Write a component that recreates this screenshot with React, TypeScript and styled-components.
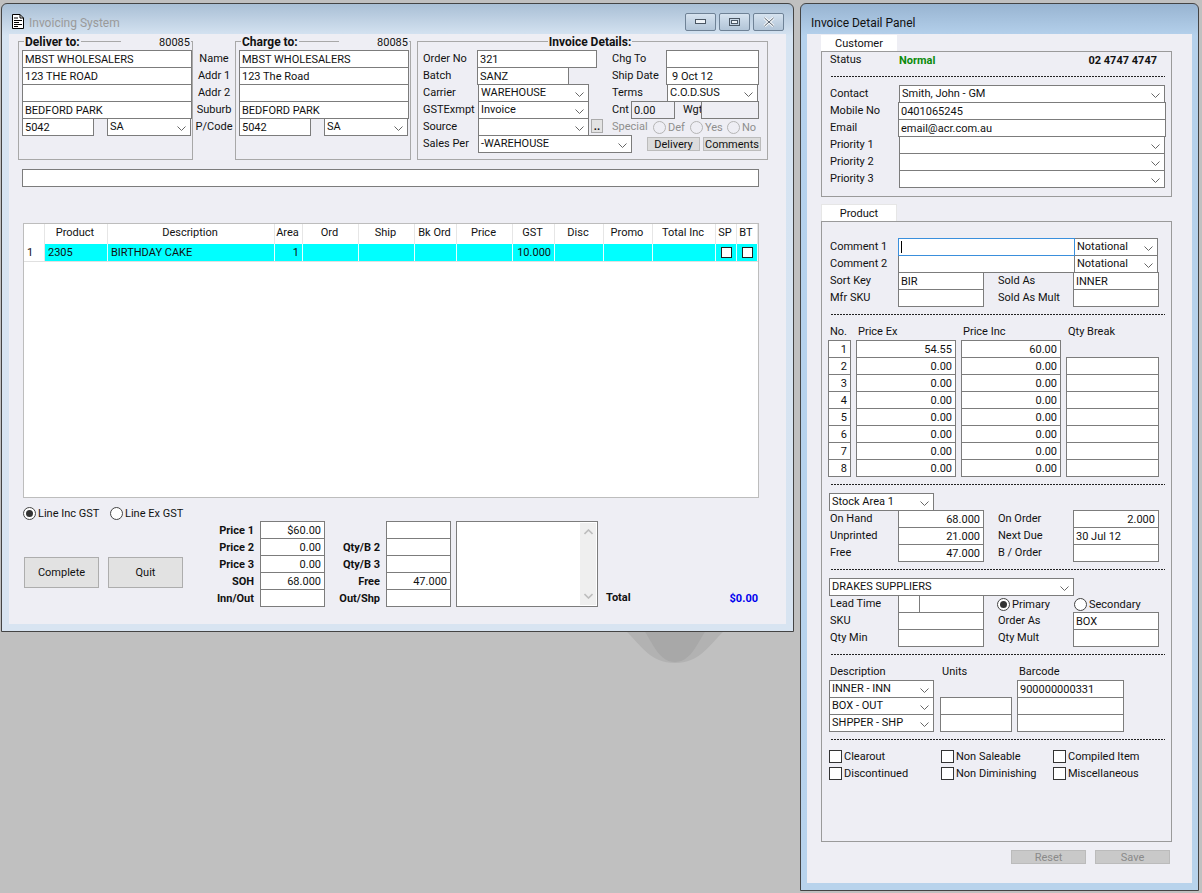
import React from 'react'
import styled, { createGlobalStyle } from 'styled-components'

const GlobalStyle = createGlobalStyle`
  html, body {
    margin: 0;
    background: #c0c0c0;
  }
  body {
    font-family: Roboto, "Liberation Sans", sans-serif;
    font-size: 11px;
    color: #111;
  }
`

const Desktop = styled.div`
  position: relative;
  width: 1202px;
  height: 893px;
  overflow: hidden;
  background: #c0c0c0;
`

const Blob = styled.svg`
  position: absolute;
  left: 620px;
  top: 630px;
`

const Window = styled.div<{ $left: number; $width: number; $height: number; $side: string; $pad: number }>`
  position: absolute;
  left: ${({ $left }) => $left}px;
  top: 3px;
  width: ${({ $width }) => $width}px;
  height: ${({ $height }) => $height}px;
  box-sizing: border-box;
  display: flex;
  flex-direction: column;
  padding: 0 ${({ $pad }) => $pad}px 7px;
  border: 1px solid #444;
  border-radius: 6px 6px 0 0;
  background: ${({ $side }) => $side};
`

const TitleBar = styled.div<{ $active?: boolean }>`
  flex: none;
  height: 30px;
  display: flex;
  align-items: center;
  gap: 5px;
  font-size: 12px;
  padding-top: 8px;
  box-sizing: border-box;
  color: ${({ $active }) => ($active ? '#111' : '#9a9a9a')};
`

const TitleIcon = styled.svg`
  flex: none;
  margin-left: 3px;
  margin-top: -3px;
`

const TitleText = styled.span`
  flex: 1;
`

const DetailTitle = styled(TitleText)`
  margin-left: 4px;
`

const CaptionButtons = styled.div`
  display: flex;
  gap: 3px;
  margin-top: -2px;
  margin-right: 2px;
`

const CaptionButton = styled.div`
  width: 31px;
  height: 18px;
  box-sizing: border-box;
  display: flex;
  align-items: center;
  justify-content: center;
  border: 1px solid #6f8296;
  border-radius: 2px;
  background: linear-gradient(#d7e3ef, #c3d3e3 50%, #b2c5d8);
`

const Client = styled.div`
  flex: 1;
  min-height: 0;
  background: #eeeef4;
`

const MainClient = styled(Client)`
  padding-top: 7px;
`

const TopRow = styled.div`
  display: flex;
  margin-left: 9px;
  height: 119px;
`

const Group = styled.div`
  position: relative;
  box-sizing: border-box;
  border: 1px solid #a8a8a8;
`

const AddressGroup = styled(Group)<{ $w: number }>`
  width: ${({ $w }) => $w}px;
  padding: 8px 0 0 3px;
`

const Legend = styled.div<{ $center?: boolean }>`
  position: absolute;
  top: -7px;
  left: 5px;
  right: ${({ $center }) => ($center ? 10 : 1)}px;
  display: flex;
  justify-content: ${({ $center }) => ($center ? 'center' : 'space-between')};
  line-height: 14px;
`

const LegendTitle = styled.span`
  background: #eeeef4;
  padding: 0 1px;
  font-weight: 700;
  font-size: 12px;
`

const LegendCode = styled.span`
  background: #eeeef4;
  width: 69px;
  text-align: right;
  padding: 1px 1px 0 0;
`

const AddressGrid = styled.div`
  display: grid;
  grid-template-columns: 72px 13px 85px;
  grid-auto-rows: 17px;
  width: 170px;
`

const Box = styled.div<{ $w?: number; $right?: boolean; $disabled?: boolean; $indent?: number }>`
  box-sizing: border-box;
  flex: none;
  width: ${({ $w }) => ($w ? `${$w}px` : 'auto')};
  height: 18px;
  border: 1px solid #7c7c7c;
  background: ${({ $disabled }) => ($disabled ? '#eeeef4' : '#fff')};
  padding: 0 ${({ $right }) => ($right ? 3 : 2)}px 0 ${({ $indent }) => $indent ?? 2}px;
  line-height: 17px;
  white-space: nowrap;
  overflow: hidden;
  text-align: ${({ $right }) => ($right ? 'right' : 'left')};
`

const WideBox = styled(Box)`
  grid-column: 1 / -1;
`

const FocusBox = styled(Box)`
  position: relative;
  border-color: #3a8fdc;
  z-index: 1;
`

const Caret = styled.span`
  display: block;
  width: 1px;
  height: 12px;
  margin: 2px 0 0 0;
  background: #000;
`

const ComboShell = styled(Box)<{ $shift?: number }>`
  display: flex;
  align-items: flex-start;
  justify-content: space-between;
  margin-left: ${({ $shift }) => $shift ?? 0}px;
  line-height: 15px;
`

const Chevron = styled.svg`
  flex: none;
  margin: 7px 2px 0 0;
`

const Combo = ({ w, text, shift }: { w?: number; text?: string; shift?: number }) => (
  <ComboShell $w={w} $shift={shift}>
    <span>{text}</span>
    <Chevron width="9" height="5" viewBox="0 0 9 5">
      <path d="M0.5 0.5 L4.5 4.5 L8.5 0.5" fill="none" stroke="#666" />
    </Chevron>
  </ComboShell>
)

const LabelColumn = styled.div`
  flex: none;
  width: 42px;
  padding-top: 9px;
  box-sizing: border-box;
  text-align: center;
  line-height: 17px;
`

const InvoiceGroup = styled(Group)`
  width: 351px;
  margin-left: 6px;
  padding: 8px 0 0 5px;
  display: flex;
`

const InvoiceColumn = styled.div<{ $w: number }>`
  flex: none;
  width: ${({ $w }) => $w}px;
`

const Row = styled.div<{ $h?: number }>`
  display: flex;
  height: ${({ $h }) => $h ?? 17}px;
  align-items: flex-start;
`

const Label = styled.span<{ $w?: number; $off?: boolean }>`
  flex: none;
  box-sizing: border-box;
  width: ${({ $w }) => ($w ? `${$w}px` : 'auto')};
  line-height: 18px;
  white-space: nowrap;
  color: ${({ $off }) => ($off ? '#8e8e8e' : 'inherit')};
`

const PanelLabel = styled(Label)`
  padding-left: 1px;
`

const SideLabel = styled(Label)`
  width: 75px;
  margin-left: 14px;
`

const WeightLabel = styled(Label)`
  width: 18px;
  margin-left: 8px;
`

const DotsButton = styled.div`
  flex: none;
  width: 12px;
  height: 14px;
  margin: 1px 0 0 2px;
  box-sizing: border-box;
  border: 1px solid #aaa;
  background: #e3e3e3;
  line-height: 14px;
  text-align: center;
  font-weight: 700;
`

const RadioDot = styled.span<{ $on?: boolean; $off?: boolean }>`
  flex: none;
  position: relative;
  display: inline-block;
  box-sizing: border-box;
  width: 13px;
  height: 13px;
  border: 1px solid ${({ $off }) => ($off ? '#b5b5b5' : '#444')};
  border-radius: 50%;
  background: ${({ $off }) => ($off ? '#eeeef4' : '#fff')};

  &::after {
    content: '';
    display: ${({ $on }) => ($on ? 'block' : 'none')};
    position: absolute;
    inset: 2px;
    border-radius: 50%;
    background: #333;
  }
`

const RadioItem = styled.label<{ $w?: number; $off?: boolean }>`
  flex: none;
  display: flex;
  align-items: center;
  gap: 2px;
  height: 15px;
  width: ${({ $w }) => ($w ? `${$w}px` : 'auto')};
  white-space: nowrap;
  color: ${({ $off }) => ($off ? '#8e8e8e' : 'inherit')};
`

const FormRadio = styled(RadioItem)`
  margin-top: 2px;
`

const PrimaryRadio = styled(FormRadio)`
  margin-left: 13px;
`

const SmallButtons = styled.div`
  display: flex;
  justify-content: flex-end;
  gap: 3px;
  width: 149px;
  padding-top: 2px;
`

const SmallButton = styled.div<{ $w: number }>`
  box-sizing: border-box;
  width: ${({ $w }) => $w}px;
  height: 14px;
  border: 1px solid #bcbcbc;
  background: #dcdcdc;
  line-height: 13px;
  text-align: center;
`

const ProgressBox = styled(Box)`
  width: 737px;
  margin: 9px 0 0 13px;
`

const GridTable = styled.div`
  box-sizing: border-box;
  width: 736px;
  height: 275px;
  margin: 36px 0 0 14px;
  border: 1px solid #bdbdbd;
  background: #fff;
`

const tableColumns = '21px 63px 167px 28px 56px 56px 42px 56px 42px 49px 49px 63px 21px 21px'

const TableRow = styled.div<{ $head?: boolean }>`
  display: grid;
  grid-template-columns: ${tableColumns};
  height: ${({ $head }) => ($head ? 20 : 18)}px;
  box-sizing: border-box;
  border-bottom: ${({ $head }) => ($head ? 'none' : '1px solid #e0e0e0')};
`

const HeadCell = styled.div`
  box-sizing: border-box;
  border-right: 1px solid #e6e6e6;
  padding-right: 2px;
  text-align: center;
  line-height: 17px;
  white-space: nowrap;
`

const DataCell = styled.div<{ $blank?: boolean; $right?: boolean }>`
  box-sizing: border-box;
  display: flex;
  align-items: center;
  justify-content: ${({ $right }) => ($right ? 'flex-end' : 'flex-start')};
  padding: 0 3px;
  border-right: 1px solid ${({ $blank }) => ($blank ? '#e6e6e6' : '#e4ffff')};
  background: ${({ $blank }) => ($blank ? '#fff' : '#00ffff')};
  white-space: nowrap;
`

const CellCheck = styled.span`
  box-sizing: border-box;
  display: block;
  width: 11px;
  height: 11px;
  margin: 0 auto;
  border: 1px solid #222;
  background: #fff;
`

const Bottom = styled.div`
  display: flex;
  margin: 7px 0 0 14px;
`

const BottomLeft = styled.div`
  flex: none;
  width: 177px;
`

const RadioRow = styled.div`
  display: flex;
  height: 16px;
  align-items: center;
  gap: 0;
`

const BigButtons = styled.div`
  display: flex;
  gap: 9px;
  margin: 36px 0 0 1px;
`

const BigButton = styled.div`
  box-sizing: border-box;
  width: 75px;
  height: 31px;
  border: 1px solid #adadad;
  background: #e2e2e2;
  text-align: center;
  line-height: 29px;
`

const PriceGrid = styled.div`
  display: grid;
  grid-template-columns: 60px 65px 61px 65px;
  grid-auto-rows: 17px;
  margin-top: 16px;
`

const PriceLabel = styled.span`
  font-weight: 700;
  text-align: right;
  padding-right: 6px;
  line-height: 19px;
  white-space: nowrap;
`

const Memo = styled.div`
  flex: none;
  box-sizing: border-box;
  width: 142px;
  height: 86px;
  margin: 16px 0 0 5px;
  padding: 1px;
  border: 1px solid #7c7c7c;
  background: #fff;
  display: flex;
  justify-content: flex-end;
`

const MemoScroll = styled.div`
  width: 16px;
  background: #efefef;
  display: flex;
  flex-direction: column;
  align-items: center;
  justify-content: space-between;
  padding: 6px 0;
  box-sizing: border-box;
`

const TotalRow = styled.div`
  flex: none;
  width: 152px;
  margin: 84px 0 0 8px;
  display: flex;
  justify-content: space-between;
  align-items: center;
  height: 16px;
  font-weight: 700;
`

const TotalValue = styled.span`
  color: #0000ee;
  margin-top: 2px;
`

const DetailClient = styled(Client)`
  padding-left: 14px;
  display: flex;
  flex-direction: column;
`

const Tab = styled.div`
  box-sizing: border-box;
  width: 76px;
  height: 16px;
  margin-top: 1px;
  background: #fff;
  text-align: center;
  line-height: 17px;
`

const ProductTab = styled(Tab)`
  height: 17px;
  margin-top: 7px;
  border: 1px solid #e6e6e6;
  border-bottom: none;
  line-height: 18px;
`

const Panel = styled(Group)<{ $h: number; $top: number }>`
  width: 351px;
  height: ${({ $h }) => $h}px;
  border-color: #9a9a9a;
  padding: ${({ $top }) => $top}px 0 0 7px;
`

const StatusRow = styled.div`
  display: flex;
  height: 15px;
  line-height: 15px;
  width: 328px;
`

const StatusLabel = styled.span`
  flex: none;
  width: 70px;
  padding-left: 1px;
  box-sizing: border-box;
`

const StatusValue = styled.span`
  flex: 1;
  color: #0a8a0a;
  font-weight: 700;
  padding-top: 1px;
`

const Phone = styled.span`
  font-weight: 700;
  padding-top: 1px;
`

const Dash = styled.div<{ $before?: number; $after?: number }>`
  width: 334px;
  height: 1px;
  margin: ${({ $before }) => $before ?? 8}px 0 ${({ $after }) => $after ?? 8}px 2px;
  background: repeating-linear-gradient(90deg, #222 0 2px, transparent 2px 3px);
`

const PriceTable = styled.div`
  display: grid;
  grid-template-columns: 23px 100px 100px 93px;
  column-gap: 5px;
  grid-auto-rows: 17px;
  margin-left: -1px;
`

const ColumnHead = styled.span<{ $w?: number }>`
  padding-left: 2px;
  line-height: 18px;
  white-space: nowrap;
  width: ${({ $w }) => ($w ? `${$w}px` : 'auto')};
  flex: none;
  box-sizing: border-box;
`

const HeadRow = styled(Row)`
  margin-left: -1px;
`

const NoCell = styled(Box)`
  text-align: right;
  padding-right: 3px;
`

const LeadBox = styled(Box)`
  margin-left: -1px;
`

const UnitGrid = styled.div`
  display: grid;
  grid-template-columns: 105px 78px 112px;
  grid-auto-rows: 17px;
`

const UnitBox = styled(Box)`
  margin-left: 6px;
`

const BarcodeBox = styled(Box)`
  margin-left: 5px;
`

const CheckGrid = styled.div`
  display: grid;
  grid-template-columns: repeat(3, 112px);
  grid-auto-rows: 17px;
`

const CheckItem = styled.label`
  display: flex;
  align-items: center;
  gap: 2px;
  height: 15px;
  white-space: nowrap;
`

const CheckMark = styled.span`
  flex: none;
  box-sizing: border-box;
  width: 13px;
  height: 13px;
  border: 1px solid #333;
  background: #fff;
`

const Actions = styled.div`
  display: flex;
  justify-content: flex-end;
  gap: 9px;
  margin-top: 8px;
  width: 349px;
`

const ActionButton = styled.div`
  box-sizing: border-box;
  width: 75px;
  height: 14px;
  border: 1px solid #bbb;
  background: #c9c9c9;
  color: #8a8a8a;
  line-height: 13px;
  text-align: center;
`

const AddressFields = ({ lines }: { lines: string[] }) => (
  <AddressGrid>
    {lines.map((line, i) => (
      <WideBox key={i}>{line}</WideBox>
    ))}
    <Box>5042</Box>
    <span />
    <Combo text="SA" w={84} />
  </AddressGrid>
)

const columns: { head: string; value?: string; right?: boolean; blank?: boolean; check?: boolean }[] = [
  { head: '', value: '1', blank: true },
  { head: 'Product', value: '2305' },
  { head: 'Description', value: 'BIRTHDAY CAKE' },
  { head: 'Area', value: '1', right: true },
  { head: 'Ord' },
  { head: 'Ship' },
  { head: 'Bk Ord' },
  { head: 'Price' },
  { head: 'GST', value: '10.000', right: true },
  { head: 'Disc' },
  { head: 'Promo' },
  { head: 'Total Inc' },
  { head: 'SP', check: true },
  { head: 'BT', check: true },
]

const priceRows = [
  ['Price 1', '$60.00', '', ''],
  ['Price 2', '0.00', 'Qty/B 2', ''],
  ['Price 3', '0.00', 'Qty/B 3', ''],
  ['SOH', '68.000', 'Free', '47.000'],
  ['Inn/Out', '', 'Out/Shp', ''],
]

const breaks = [
  ['54.55', '60.00'],
  ['0.00', '0.00'],
  ['0.00', '0.00'],
  ['0.00', '0.00'],
  ['0.00', '0.00'],
  ['0.00', '0.00'],
  ['0.00', '0.00'],
  ['0.00', '0.00'],
]

const checks = ['Clearout', 'Non Saleable', 'Compiled Item', 'Discontinued', 'Non Diminishing', 'Miscellaneous']

const MainWindow = () => (
  <Window $left={1} $width={793} $height={629} $pad={7} $side="linear-gradient(#a9bfd5 0, #d6e4f2 32px, #d8e4f1 100%)">
    <TitleBar>
      <TitleIcon width="12" height="15" viewBox="0 0 12 15">
        <path d="M0.5 0.5 H8 L11.5 4 V14.5 H0.5 Z" fill="#fff" stroke="#000" />
        <path d="M8 0.5 V4 H11.5 M2 4 H6 M2 6.5 H10 M2 8.5 H7 M2 10.5 H10 M2 12.5 H6" fill="none" stroke="#000" />
      </TitleIcon>
      <TitleText>Invoicing System</TitleText>
      <CaptionButtons>
        <CaptionButton>
          <svg width="11" height="6" viewBox="0 0 11 6">
            <rect x="0.5" y="0.5" width="10" height="4" fill="#eef3f8" stroke="#4a5663" />
          </svg>
        </CaptionButton>
        <CaptionButton>
          <svg width="11" height="9" viewBox="0 0 11 9">
            <rect x="0.5" y="0.5" width="10" height="7" fill="none" stroke="#4a5663" />
            <rect x="2.5" y="2.5" width="6" height="3" fill="#eef3f8" stroke="#4a5663" />
          </svg>
        </CaptionButton>
        <CaptionButton>
          <svg width="12" height="10" viewBox="0 0 12 10">
            <path d="M1.5 1 L10.5 9 M10.5 1 L1.5 9" stroke="#f4f6f8" strokeWidth="3" />
            <path d="M1.5 1 L10.5 9 M10.5 1 L1.5 9" stroke="#56626f" strokeWidth="1" />
          </svg>
        </CaptionButton>
      </CaptionButtons>
    </TitleBar>
    <MainClient>
      <TopRow>
        <AddressGroup $w={175}>
          <Legend>
            <LegendTitle>Deliver to:</LegendTitle>
            <LegendCode>80085</LegendCode>
          </Legend>
          <AddressFields lines={['MBST WHOLESALERS', '123 THE ROAD', '', 'BEDFORD PARK']} />
        </AddressGroup>
        <LabelColumn>
          <div>Name</div>
          <div>Addr 1</div>
          <div>Addr 2</div>
          <div>Suburb</div>
          <div>P/Code</div>
        </LabelColumn>
        <AddressGroup $w={176}>
          <Legend>
            <LegendTitle>Charge to:</LegendTitle>
            <LegendCode>80085</LegendCode>
          </Legend>
          <AddressFields lines={['MBST WHOLESALERS', '123 The Road', '', 'BEDFORD PARK']} />
        </AddressGroup>
        <InvoiceGroup>
          <Legend $center>
            <LegendTitle>Invoice Details:</LegendTitle>
          </Legend>
          <InvoiceColumn $w={189}>
            <Row>
              <Label $w={54}>Order No</Label>
              <Box $w={120}>321</Box>
            </Row>
            <Row>
              <Label $w={54}>Batch</Label>
              <Box $w={92}>SANZ</Box>
            </Row>
            <Row>
              <Label $w={55}>Carrier</Label>
              <Combo text="WAREHOUSE" w={111} />
            </Row>
            <Row>
              <Label $w={55}>GSTExmpt</Label>
              <Combo text="Invoice" w={111} />
            </Row>
            <Row>
              <Label $w={55}>Source</Label>
              <Combo w={111} />
              <DotsButton>..</DotsButton>
            </Row>
            <Row>
              <Label $w={55}>Sales Per</Label>
              <Combo text="-WAREHOUSE" w={154} />
            </Row>
          </InvoiceColumn>
          <InvoiceColumn $w={149}>
            <Row>
              <Label $w={54}>Chg To</Label>
              <Box $w={93} />
            </Row>
            <Row>
              <Label $w={54}>Ship Date</Label>
              <Box $w={93} $indent={5}>
                9 Oct 12
              </Box>
            </Row>
            <Row>
              <Label $w={55}>Terms</Label>
              <Combo text="C.O.D.SUS" w={91} />
            </Row>
            <Row>
              <Label $w={19}>Cnt</Label>
              <Box $w={44} $disabled>
                0.00
              </Box>
              <WeightLabel>Wgt</WeightLabel>
              <Box $w={58} $disabled />
            </Row>
            <Row>
              <Label $w={41} $off>
                Special
              </Label>
              <FormRadio $w={37} $off>
                <RadioDot $off />
                Def
              </FormRadio>
              <FormRadio $w={37} $off>
                <RadioDot $off />
                Yes
              </FormRadio>
              <FormRadio $w={30} $off>
                <RadioDot $off />
                No
              </FormRadio>
            </Row>
            <SmallButtons>
              <SmallButton $w={53}>Delivery</SmallButton>
              <SmallButton $w={58}>Comments</SmallButton>
            </SmallButtons>
          </InvoiceColumn>
        </InvoiceGroup>
      </TopRow>
      <ProgressBox />
      <GridTable>
        <TableRow $head>
          {columns.map((c) => (
            <HeadCell key={c.head}>{c.head}</HeadCell>
          ))}
        </TableRow>
        <TableRow>
          {columns.map((c) => (
            <DataCell key={c.head} $blank={c.blank} $right={c.right}>
              {c.check ? <CellCheck /> : c.value}
            </DataCell>
          ))}
        </TableRow>
      </GridTable>
      <Bottom>
        <BottomLeft>
          <RadioRow>
            <RadioItem $w={87}>
              <RadioDot $on />
              Line Inc GST
            </RadioItem>
            <RadioItem>
              <RadioDot />
              Line Ex GST
            </RadioItem>
          </RadioRow>
          <BigButtons>
            <BigButton>Complete</BigButton>
            <BigButton>Quit</BigButton>
          </BigButtons>
        </BottomLeft>
        <PriceGrid>
          {priceRows.map((r) => (
            <React.Fragment key={r[0]}>
              <PriceLabel>{r[0]}</PriceLabel>
              <Box $right>{r[1]}</Box>
              <PriceLabel>{r[2]}</PriceLabel>
              <Box $right>{r[3]}</Box>
            </React.Fragment>
          ))}
        </PriceGrid>
        <Memo>
          <MemoScroll>
            <svg width="9" height="6" viewBox="0 0 9 6">
              <path d="M0.5 5 L4.5 1 L8.5 5" fill="none" stroke="#bdbdbd" strokeWidth="1.6" />
            </svg>
            <svg width="9" height="6" viewBox="0 0 9 6">
              <path d="M0.5 1 L4.5 5 L8.5 1" fill="none" stroke="#bdbdbd" strokeWidth="1.6" />
            </svg>
          </MemoScroll>
        </Memo>
        <TotalRow>
          <span>Total</span>
          <TotalValue>$0.00</TotalValue>
        </TotalRow>
      </Bottom>
    </MainClient>
  </Window>
)

const DetailWindow = () => (
  <Window $left={800} $width={399} $height={888} $pad={6} $side="linear-gradient(#98b4d1 0, #b5d1ec 32px, #b8d3ec 100%)">
    <TitleBar $active>
      <DetailTitle>Invoice Detail Panel</DetailTitle>
    </TitleBar>
    <DetailClient>
      <Tab>Customer</Tab>
      <Panel $h={146} $top={0}>
        <StatusRow>
          <StatusLabel>Status</StatusLabel>
          <StatusValue>Normal</StatusValue>
          <Phone>02 4747 4747</Phone>
        </StatusRow>
        <Dash $before={9} />
        <Row>
          <PanelLabel $w={70}>Contact</PanelLabel>
          <Combo text="Smith, John - GM" w={266} />
        </Row>
        <Row>
          <PanelLabel $w={69}>Mobile No</PanelLabel>
          <Box $w={268}>0401065245</Box>
        </Row>
        <Row>
          <PanelLabel $w={69}>Email</PanelLabel>
          <Box $w={268}>email@acr.com.au</Box>
        </Row>
        <Row>
          <PanelLabel $w={70}>Priority 1</PanelLabel>
          <Combo w={266} />
        </Row>
        <Row>
          <PanelLabel $w={70}>Priority 2</PanelLabel>
          <Combo w={266} />
        </Row>
        <Row>
          <PanelLabel $w={70}>Priority 3</PanelLabel>
          <Combo w={266} />
        </Row>
      </Panel>
      <ProductTab>Product</ProductTab>
      <Panel $h={621} $top={16}>
        <Row>
          <PanelLabel $w={69}>Comment 1</PanelLabel>
          <FocusBox $w={177}>
            <Caret />
          </FocusBox>
          <Combo text="Notational" w={84} shift={-1} />
        </Row>
        <Row>
          <PanelLabel $w={69}>Comment 2</PanelLabel>
          <Box $w={177} />
          <Combo text="Notational" w={84} shift={-1} />
        </Row>
        <Row>
          <PanelLabel $w={69}>Sort Key</PanelLabel>
          <Box $w={86}>BIR</Box>
          <SideLabel>Sold As</SideLabel>
          <Box $w={86}>INNER</Box>
        </Row>
        <Row>
          <PanelLabel $w={69}>Mfr SKU</PanelLabel>
          <Box $w={86} />
          <SideLabel>Sold As Mult</SideLabel>
          <Box $w={86} />
        </Row>
        <Dash />
        <PriceTable>
          <ColumnHead>No.</ColumnHead>
          <ColumnHead>Price Ex</ColumnHead>
          <ColumnHead>Price Inc</ColumnHead>
          <ColumnHead>Qty Break</ColumnHead>
          {breaks.map((b, i) => (
            <React.Fragment key={i}>
              <NoCell>{i + 1}</NoCell>
              <Box $right>{b[0]}</Box>
              <Box $right>{b[1]}</Box>
              {i === 0 ? <span /> : <Box />}
            </React.Fragment>
          ))}
        </PriceTable>
        <Dash />
        <Row>
          <Combo text="Stock Area 1" w={105} />
        </Row>
        <Row>
          <PanelLabel $w={69}>On Hand</PanelLabel>
          <Box $w={86} $right>
            68.000
          </Box>
          <SideLabel>On Order</SideLabel>
          <Box $w={86} $right>
            2.000
          </Box>
        </Row>
        <Row>
          <PanelLabel $w={69}>Unprinted</PanelLabel>
          <Box $w={86} $right>
            21.000
          </Box>
          <SideLabel>Next Due</SideLabel>
          <Box $w={86}>30 Jul 12</Box>
        </Row>
        <Row>
          <PanelLabel $w={69}>Free</PanelLabel>
          <Box $w={86} $right>
            47.000
          </Box>
          <SideLabel>B / Order</SideLabel>
          <Box $w={86} />
        </Row>
        <Dash />
        <Row>
          <Combo text="DRAKES SUPPLIERS" w={245} />
        </Row>
        <Row>
          <PanelLabel $w={69}>Lead Time</PanelLabel>
          <Box $w={22} />
          <LeadBox $w={65} />
          <PrimaryRadio $w={77}>
            <RadioDot $on />
            Primary
          </PrimaryRadio>
          <FormRadio>
            <RadioDot />
            Secondary
          </FormRadio>
        </Row>
        <Row>
          <PanelLabel $w={69}>SKU</PanelLabel>
          <Box $w={86} />
          <SideLabel>Order As</SideLabel>
          <Box $w={86}>BOX</Box>
        </Row>
        <Row>
          <PanelLabel $w={69}>Qty Min</PanelLabel>
          <Box $w={86} />
          <SideLabel>Qty Mult</SideLabel>
          <Box $w={86} />
        </Row>
        <Dash />
        <HeadRow>
          <ColumnHead $w={112}>Description</ColumnHead>
          <ColumnHead $w={77}>Units</ColumnHead>
          <ColumnHead>Barcode</ColumnHead>
        </HeadRow>
        <UnitGrid>
          <Combo text="INNER - INN" />
          <span />
          <BarcodeBox $w={107}>900000000331</BarcodeBox>
          <Combo text="BOX - OUT" />
          <UnitBox $w={72} />
          <BarcodeBox $w={107} />
          <Combo text="SHPPER - SHP" />
          <UnitBox $w={72} />
          <BarcodeBox $w={107} />
        </UnitGrid>
        <Dash $after={9} />
        <CheckGrid>
          {checks.map((c) => (
            <CheckItem key={c}>
              <CheckMark />
              {c}
            </CheckItem>
          ))}
        </CheckGrid>
      </Panel>
      <Actions>
        <ActionButton>Reset</ActionButton>
        <ActionButton>Save</ActionButton>
      </Actions>
    </DetailClient>
  </Window>
)

const App = () => (
  <Desktop>
    <GlobalStyle />
    <Blob width="110" height="36" viewBox="0 0 110 36">
      <path d="M5 0 C22 16 30 33 55 33 C80 33 88 16 105 0 Z" fill="#b2b2b2" />
      <path d="M24 0 C34 16 40 32 55 32 C70 32 76 16 86 0 Z" fill="#a8a8a8" />
    </Blob>
    <MainWindow />
    <DetailWindow />
  </Desktop>
)

export default App
